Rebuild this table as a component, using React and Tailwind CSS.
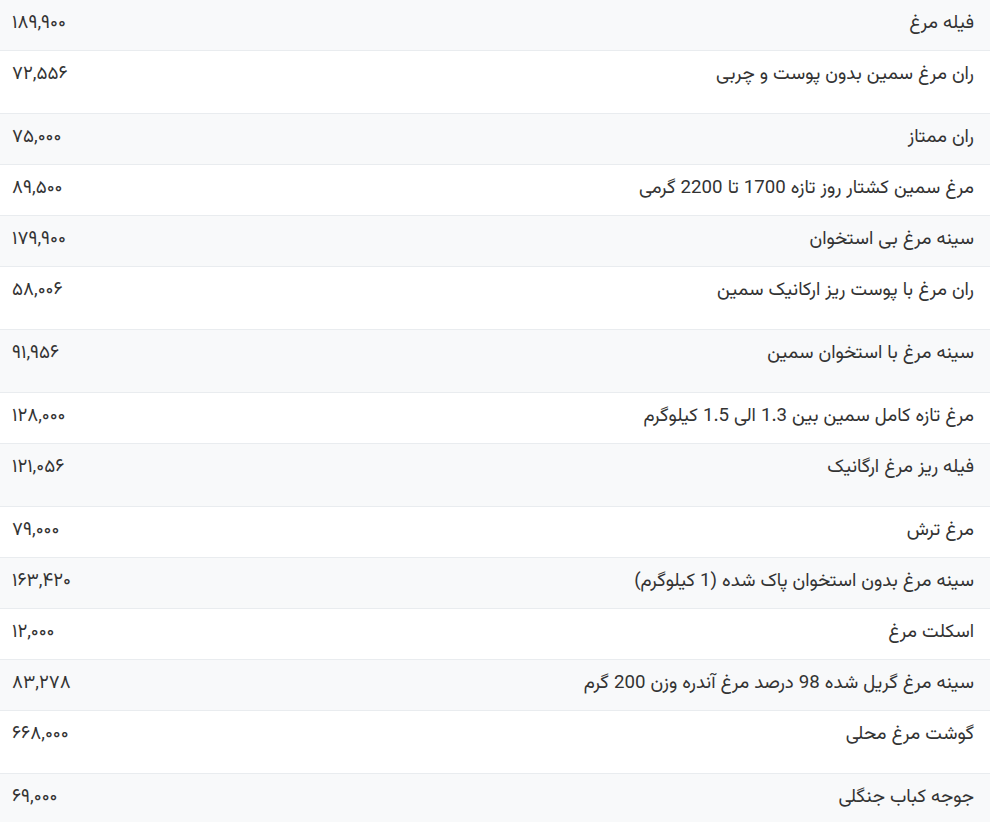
import React from "react";

const rows = [
  ["فیله مرغ", "۱۸۹,۹۰۰", false],
  ["ران مرغ سمین بدون پوست و چربی", "۷۲,۵۵۶", true],
  ["ران ممتاز", "۷۵,۰۰۰", false],
  ["مرغ سمین کشتار روز تازه 1700 تا 2200 گرمی", "۸۹,۵۰۰", false],
  ["سینه مرغ بی استخوان", "۱۷۹,۹۰۰", false],
  ["ران مرغ با پوست ریز ارکانیک سمین", "۵۸,۰۰۶", true],
  ["سینه مرغ با استخوان سمین", "۹۱,۹۵۶", true],
  ["مرغ تازه کامل سمین بین 1.3 الی 1.5 کیلوگرم", "۱۲۸,۰۰۰", false],
  ["فیله ریز مرغ ارگانیک", "۱۲۱,۰۵۶", true],
  ["مرغ ترش", "۷۹,۰۰۰", false],
  ["سینه مرغ بدون استخوان پاک شده (1 کیلوگرم)", "۱۶۳,۴۲۰", false],
  ["اسکلت مرغ", "۱۲,۰۰۰", false],
  ["سینه مرغ گریل شده 98 درصد مرغ آندره وزن 200 گرم", "۸۳,۲۷۸", false],
  ["گوشت مرغ محلی", "۶۶۸,۰۰۰", true],
  ["جوجه کباب جنگلی", "۶۹,۰۰۰", false],
];

export default function App() {
  return (
    <div
      dir="rtl"
      className="w-[990px] h-[822px] overflow-hidden bg-white text-[#333333] text-[18.7px] leading-[26px]"
      style={{ fontFamily: 'Vazirmatn, Roboto, sans-serif' }}
    >
      {rows.map(([name, price, tall], i) => (
        <div
          key={i}
          className={`flex justify-between border-b border-[#e9ecef] ${
            i % 2 === 0 ? "bg-[#f8f9fa]" : "bg-white"
          } ${tall ? "pt-[11px] pb-[25px]" : "pt-[11px] pb-[13px]"}`}
        >
          <div className="pr-[16px]">{name}</div>
          <div className="pl-[12px]" dir="ltr">{price}</div>
        </div>
      ))}
    </div>
  );
}
